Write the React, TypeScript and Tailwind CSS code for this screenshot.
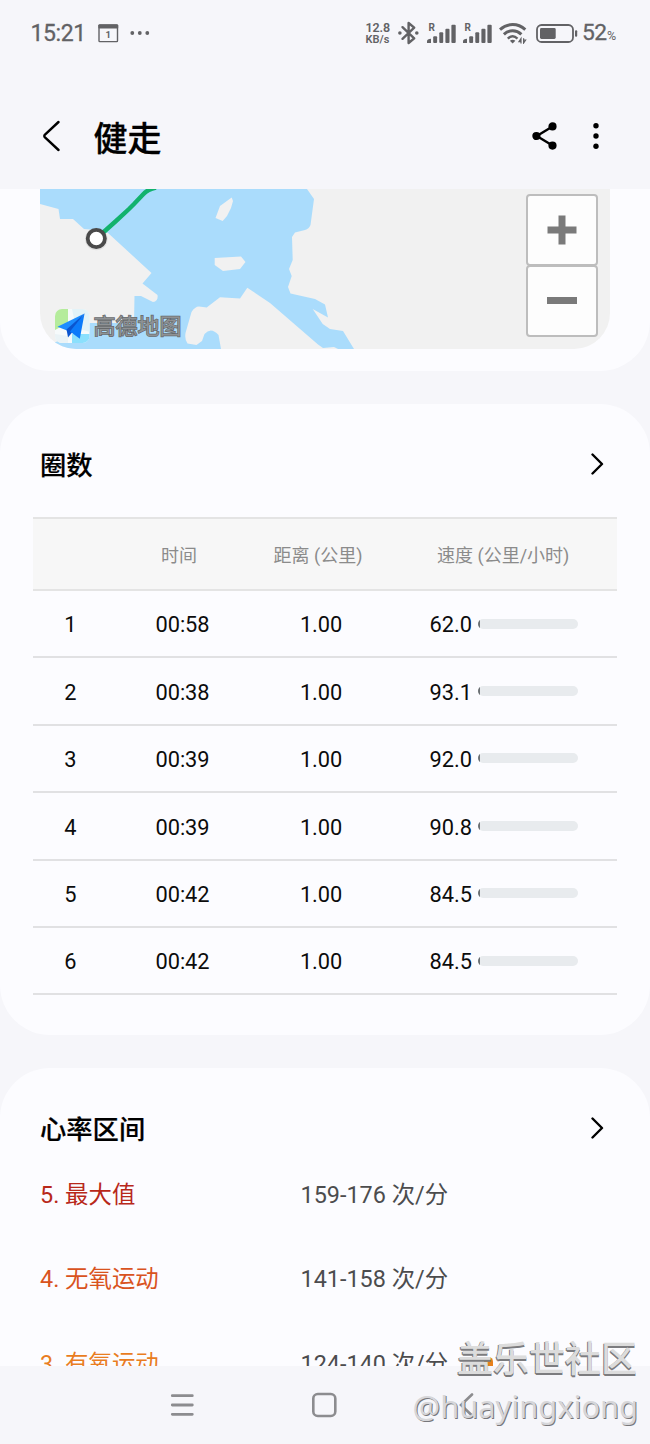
import React from 'react';

interface Lap {
  id: number;
  time: string;
  distance: string;
  speed: string;
}

interface Zone {
  label: string;
  range: string;
  color: string;
  marker?: boolean;
}

const laps: Lap[] = [
  { id: 1, time: '00:58', distance: '1.00', speed: '62.0' },
  { id: 2, time: '00:38', distance: '1.00', speed: '93.1' },
  { id: 3, time: '00:39', distance: '1.00', speed: '92.0' },
  { id: 4, time: '00:39', distance: '1.00', speed: '90.8' },
  { id: 5, time: '00:42', distance: '1.00', speed: '84.5' },
  { id: 6, time: '00:42', distance: '1.00', speed: '84.5' },
];

const zones: Zone[] = [
  { label: '5. 最大值', range: '159-176 次/分', color: 'text-[#b8281a]' },
  { label: '4. 无氧运动', range: '141-158 次/分', color: 'text-[#d9531e]' },
  { label: '3. 有氧运动', range: '124-140 次/分', color: 'text-[#e97d1f]', marker: true },
];

const Signal: React.FC = () => (
  <svg className="w-[29px] h-[22px] shrink-0" viewBox="0 0 29 22" fill="#626265">
    <text x="1.5" y="8.8" fontSize="10" fontWeight="700" fontFamily="Roboto, sans-serif">R</text>
    <path d="M0 20.9V19.2Q0 17 4 16.8V20.9Z" />
    <rect x="6.2" y="14.3" width="3.9" height="6.7" rx="1" />
    <rect x="12.3" y="10.3" width="3.9" height="10.7" rx="1" />
    <rect x="18.4" y="6.8" width="4.1" height="14.2" rx="1" />
    <rect x="24.4" y="2.8" width="4.3" height="18.2" rx="1" />
  </svg>
);

const StatusBar: React.FC = () => (
  <div className="flex items-center h-[66px] pl-[30.5px] text-[#626265]">
    <span className="w-[67.5px] pt-px text-[23px] leading-none tracking-[-0.4px] [-webkit-text-stroke:0.3px_#626265]">15:21</span>
    <svg className="w-[21px] h-[19px]" viewBox="0 0 21 19" fill="none">
      <rect x="1" y="1" width="18.5" height="16.6" rx="0.8" stroke="#626265" strokeWidth="1.4" />
      <rect x="0.4" y="0.4" width="19.8" height="4.2" rx="0.8" fill="#626265" />
      <text x="7.4" y="14" fontSize="9.5" fontWeight="700" fontFamily="Roboto, sans-serif" fill="#626265">1</text>
    </svg>
    <svg className="w-[20px] h-[4px] ml-[10.5px]" viewBox="0 0 20 4" fill="#626265">
      <circle cx="2.3" cy="2" r="1.9" />
      <circle cx="9.8" cy="2" r="1.9" />
      <circle cx="17.3" cy="2" r="1.9" />
    </svg>

    <div className="flex flex-col w-[26px] ml-[216px] pt-[2px] font-semibold">
      <span className="text-[12.5px] leading-[12px] tracking-[-0.1px]">12.8</span>
      <span className="text-[11px] leading-[12px]">KB/s</span>
    </div>
    <svg className="w-[21px] h-[24px] ml-[6px] shrink-0" viewBox="0 0 21 24" fill="none" stroke="#626265" strokeWidth="2.4">
      <path d="M4.5 6.2 16.2 17.3 10.6 22V2L16.2 6.7 4.5 17.8" strokeLinejoin="round" strokeLinecap="round" />
      <circle cx="1.9" cy="12" r="1.8" fill="#626265" stroke="none" />
      <circle cx="18.8" cy="12" r="1.8" fill="#626265" stroke="none" />
    </svg>
    <div className="flex gap-[7px] ml-[8px]">
      <Signal />
      <Signal />
    </div>
    <svg className="w-[28px] h-[21px] ml-[7.5px] shrink-0" viewBox="0 0 28 21" fill="none" stroke="#626265" strokeWidth="3">
      <path d="M1 6.6C8.5-.2 18.8-.2 26.3 6.6" />
      <path d="M4.9 11.3C10 6.5 17.3 6.5 22.4 11.3" />
      <path d="M8.8 15.6C11.8 12.8 15.5 12.8 18.5 15.6" strokeWidth="2.4" />
      <path d="M13.6 20.4 10.9 17.7Q13.6 15.9 16.4 17.7Z" fill="#626265" stroke="none" />
      <path d="M22 20.4V15.6L20 18.6H22M24.6 15.2V20L26.6 17H24.6" strokeWidth="1.2" />
    </svg>
    <svg className="w-[42px] h-[19px] ml-[8.5px] shrink-0" viewBox="0 0 42 19" fill="none">
      <rect x="1" y="1" width="36" height="17" rx="4.6" stroke="#626265" strokeWidth="1.8" />
      <rect x="4" y="4" width="15.7" height="11" rx="1.4" fill="#626265" />
      <rect x="39" y="6.3" width="2.2" height="6.4" rx="1" fill="#626265" />
    </svg>
    <span className="pt-px ml-[4.5px] text-[22.8px] leading-none tracking-[-0.6px] [-webkit-text-stroke:0.3px_#626265]">52</span>
    <span className="pt-[6px] ml-[0.5px] text-[12.5px] leading-none">%</span>
  </div>
);

const Header: React.FC = () => (
  <header className="flex items-center h-[123px] pt-[17px] pl-[42px] text-black">
    <svg className="w-[18px] h-[32px]" viewBox="0 0 18 32" fill="none" stroke="black" strokeWidth="2.4">
      <path d="M16.5 2 3 14.6Q1.6 16 3 17.4L16.5 30" strokeLinecap="round" />
    </svg>
    <h1 className="pt-[5px] ml-[33.5px] text-[34px] font-medium leading-none [-webkit-text-stroke:0.3px_black]">健走</h1>
    <svg className="w-[26px] h-[28px] ml-[370px]" viewBox="0 0 26 28" stroke="black" strokeWidth="2.4">
      <path d="M20.5 4.4 4.8 14 20.5 23.6" fill="none" />
      <circle cx="20.5" cy="4.4" r="2.9" />
      <circle cx="4.4" cy="14" r="2.9" />
      <circle cx="20.5" cy="23.6" r="2.9" />
    </svg>
    <svg className="w-[6px] h-[26px] ml-[35.5px]" viewBox="0 0 6 26">
      <circle cx="3" cy="2.7" r="2.7" />
      <circle cx="3" cy="13" r="2.7" />
      <circle cx="3" cy="23.3" r="2.7" />
    </svg>
  </header>
);

const MapView: React.FC = () => (
  <div className="relative h-[160px] mx-10 overflow-hidden rounded-b-[36px] bg-[#f1f1f1]">
    <svg className="block w-[570px] h-[160px]" viewBox="40 189 570 160">
      {/* Water */}
      <path
        fill="#aadcfc"
        d="M40 189H307L314 199 310.5 225Q309 229 305 230L295 232.5 292 237 292.7 260 289 269 291.7 276 288 287 290.5 293.5 315 299 325 304.5 328 317.5 312.7 309 322.7 324 330 329 343 331 354 349H40V342H56L90 323H134L134.5 296H141L153 302Q158.5 301 157.5 295L142.5 283.5 151.5 273 108 233 97 230 84 229 73 219H60L58.5 209 40 204Z"
      />
      {/* Land */}
      <path
        fill="#f1f1f1"
        d="M221 349 218.5 335Q211 326.5 204.5 334L202 341 196.5 345 187.5 343.5Q184.5 340 185.5 333L191.5 312Q195 306.5 199 306.5L206.7 307.5 220 297.3 240 298.5 247.3 287.7 270 303 318 344.5 323 348 334 347 338 349Z"
      />
      <path fill="#f1f1f1" d="M231.7 197.5 233 201 231 208 227 216 222.7 221 215.5 218 220 206ZM214.7 258 241 256.5 245.5 262 240 269 223 271 214.7 265Z" />
      {/* Route */}
      <path d="M97 238 116 221 129 209 134 204 143 194.5Q148 189 156 187.5" fill="none" stroke="#12b26d" strokeWidth="4.4" />
      <circle cx="96.3" cy="239" r="11.3" fill="#000" opacity="0.08" />
      <circle cx="96.3" cy="238.5" r="8.6" fill="#fff" stroke="#4a4a4a" strokeWidth="3.8" />
      {/* Provider logo */}
      <clipPath id="tile">
        <rect x="55" y="309" width="34.5" height="34" rx="7" />
      </clipPath>
      <g clipPath="url(#tile)">
        <rect x="55" y="309" width="35" height="34" fill="#f6fafb" />
        <path d="M55 309H68V323L55 330Z" fill="#b5ec9c" />
        <path d="M72 309H90V332L76 328Z" fill="#e3f3f8" />
        <path d="M72 334H90V343H72Z" fill="#8be0fd" />
        <path d="M55 334 68 336V343H55Z" fill="#eaf3f6" />
      </g>
      <path d="M84.5 313.5 57.5 326.8 67 330.5Z" fill="#1c8dff" />
      <path d="M84.5 313.5 66.5 329.5 68 337.5 72 332.5Z" fill="#0a55cf" />
      <path d="M84.5 313.5 70 331.5 79.8 338.8Z" fill="#0c7bfa" />
      <text
        x="93.5"
        y="334"
        fontSize="22"
        fontWeight="400"
        fontFamily="'Noto Sans CJK SC', sans-serif"
        fill="#8f9294"
        stroke="#66696b"
        strokeWidth="1.4"
        paintOrder="stroke"
      >
        高德地图
      </text>
    </svg>
    <div className="absolute top-[5px] right-[12px] flex flex-col">
      <button className="flex items-center justify-center w-[72px] h-[72px] bg-[#fdfdfd] border-2 border-[#bdbdbd] rounded-[4px]">
        <svg className="w-[30px] h-[30px]" viewBox="0 0 30 30" fill="#7a7a7a">
          <path d="M11.5 0.5H18.5V11.5H29.5V18.5H18.5V29.5H11.5V18.5H0.5V11.5H11.5Z" />
        </svg>
      </button>
      <button className="flex items-center justify-center w-[72px] h-[72px] pb-[2px] -mt-px bg-[#fdfdfd] border-2 border-[#bdbdbd] rounded-[4px]">
        <span className="w-[30px] h-[7px] bg-[#7a7a7a]" />
      </button>
    </div>
  </div>
);

const SectionTitle: React.FC<{ title: string }> = ({ title }) => (
  <div className="flex items-center justify-between h-[40px] pl-10 pr-[46px]">
    <h2 className="pt-[2px] text-[26.3px] font-medium leading-[40px] text-black [-webkit-text-stroke:0.2px_black]">{title}</h2>
    <svg className="w-[14px] h-[22px] mb-[2px]" viewBox="0 0 14 22" fill="none" stroke="black" strokeWidth="2.4">
      <path d="M2.5 1.5 12 11 2.5 20.5" strokeLinecap="round" strokeLinejoin="round" />
    </svg>
  </div>
);

const LapTable: React.FC = () => (
  <div className="mx-[33px] mt-8 border-t-2 border-[#e4e4e4]">
    <div className="grid grid-cols-[75px_149px_128px_232px] items-center h-[72px] pt-[3px] bg-[#f7f7f7] border-b-2 border-[#e4e4e4] text-[18px] text-[#8b8b8b]">
      <span />
      <span className="pr-[7px] text-center">时间</span>
      <span className="pr-[6px] text-center whitespace-nowrap -mx-2">距离 (公里)</span>
      <span className="pl-[52px] whitespace-nowrap">速度 (公里/小时)</span>
    </div>
    {laps.map((lap) => (
      <div
        key={lap.id}
        className="grid grid-cols-[75px_149px_128px_232px] items-center h-[67.4px] pt-[4px] border-b-2 border-[#e1e1e3] text-[21.8px] text-[#0c0c0c]"
      >
        <span className="text-center">{lap.id}</span>
        <span className="text-center tracking-[-0.1px]">{lap.time}</span>
        <span className="text-center tracking-[-0.1px]">{lap.distance}</span>
        <div className="flex items-center pl-[44.5px]">
          <span className="w-[48.5px]">{lap.speed}</span>
          <div className="w-[100px] h-[10px] mb-[4px] overflow-hidden bg-[#e8ebee] rounded-[5px]">
            <div className="w-[1.5px] h-full bg-[#6b7073]" />
          </div>
        </div>
      </div>
    ))}
  </div>
);

const NavBar: React.FC = () => (
  <nav className="flex items-center h-[78px] shrink-0 pl-[170px] bg-[#f6f6fa]">
    <svg className="w-[24px] h-[24px]" viewBox="0 0 24 24" stroke="#8c8c8f" strokeWidth="2.8" strokeLinecap="round">
      <path d="M2.3 2.7H22.3M2.3 12H22.3M2.3 21.3H22.3" />
    </svg>
    <svg className="w-[26px] h-[26px] ml-[117px]" viewBox="0 0 26 26" fill="none" stroke="#8c8c8f" strokeWidth="2.6">
      <rect x="2.3" y="2" width="22" height="22" rx="4.5" />
    </svg>
    <svg className="w-[15px] h-[24px] ml-[122px]" viewBox="0 0 15 24" fill="none" stroke="#8c8c8f" strokeWidth="2.6">
      <path d="M13 1.5 2 12 13 22.5" strokeLinecap="round" />
    </svg>
  </nav>
);

export default function App() {
  return (
    <div className="relative flex flex-col w-[650px] h-[1444px] overflow-hidden bg-[#f6f6fa] font-[Roboto,'Noto_Sans_CJK_SC',sans-serif]">
      <StatusBar />
      <Header />

      <main className="flex flex-col flex-1 min-h-0 gap-[33px] overflow-hidden">
        <section className="h-[182px] shrink-0 bg-[#fcfcff] rounded-b-[50px]">
          <MapView />
        </section>

        <section className="h-[631px] shrink-0 pt-[41px] bg-[#fcfcff] rounded-[50px]">
          <SectionTitle title="圈数" />
          <LapTable />
        </section>

        <section className="h-[640px] shrink-0 pt-[41px] bg-[#fcfcff] rounded-t-[50px]">
          <SectionTitle title="心率区间" />
          <div className="pt-[4px]">
            {zones.map((zone) => (
              <div key={zone.label} className="flex items-center h-[84.5px] pl-10 text-[23.4px]">
                <span className={`w-[260.5px] ${zone.color}`}>{zone.label}</span>
                <span className="w-[183px] text-[#4c4c4e] whitespace-nowrap">{zone.range}</span>
                {zone.marker && <span className="w-[9px] h-[14px] bg-[#e8801c] rounded-full" />}
              </div>
            ))}
          </div>
        </section>
      </main>

      <NavBar />

      {/* Watermark */}
      <div className="absolute right-[12px] bottom-[15px] flex flex-col items-end">
        <span className="pr-px text-[36px] font-medium leading-[46px] text-[#dcdcdc] [text-shadow:-1px_1px_0_#7c7c7f,0_2px_0_#7c7c7f]">
          盖乐世社区
        </span>
        <span className="font-['Noto_Sans'] text-[30.8px] leading-[46px] text-[#d6d6d9] [text-shadow:1px_1px_0_#77777b]">
          @huayingxiong
        </span>
      </div>
    </div>
  );
}
